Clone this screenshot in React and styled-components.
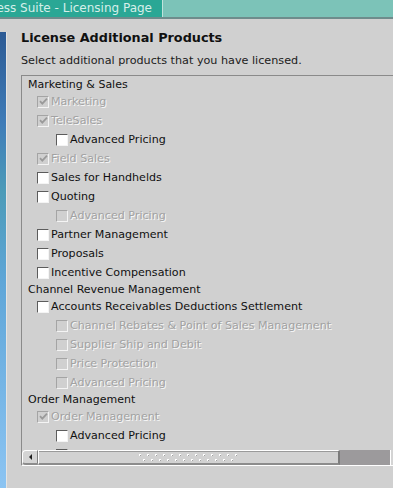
import React from "react";
import styled, { createGlobalStyle } from "styled-components";

const GlobalStyle = createGlobalStyle`
    html, body {
        margin: 0;
        padding: 0;
        background: #d0d0d0;
    }
    body {
        font-family: "DejaVu Sans", Verdana, sans-serif;
        overflow: hidden;
    }
`;

const groups = [
    {
        name: "Marketing & Sales",
        items: [
            { label: "Marketing", level: 1, checked: true, disabled: true },
            { label: "TeleSales", level: 1, checked: true, disabled: true },
            { label: "Advanced Pricing", level: 2 },
            { label: "Field Sales", level: 1, checked: true, disabled: true },
            { label: "Sales for Handhelds", level: 1 },
            { label: "Quoting", level: 1 },
            { label: "Advanced Pricing", level: 2, disabled: true },
            { label: "Partner Management", level: 1 },
            { label: "Proposals", level: 1 },
            { label: "Incentive Compensation", level: 1 },
        ],
    },
    {
        name: "Channel Revenue Management",
        items: [
            { label: "Accounts Receivables Deductions Settlement", level: 1 },
            { label: "Channel Rebates & Point of Sales Management", level: 2, disabled: true },
            { label: "Supplier Ship and Debit", level: 2, disabled: true },
            { label: "Price Protection", level: 2, disabled: true },
            { label: "Advanced Pricing", level: 2, disabled: true },
        ],
    },
    {
        name: "Order Management",
        items: [
            { label: "Order Management", level: 1, checked: true, disabled: true },
            { label: "Advanced Pricing", level: 2 },
            // only the top of this box shows above the scrollbar
            { label: "", level: 2 },
        ],
    },
];

function CheckBox({ checked, disabled }) {
    return (
        <Box $disabled={disabled}>
            {checked && (
                <svg width="9" height="9" viewBox="0 0 9 9">
                    <path
                        d="M1 4.2 L3.3 6.6 L8 1.6"
                        fill="none"
                        stroke={disabled ? "#9a9a9a" : "#202020"}
                        strokeWidth="1.8"
                    />
                </svg>
            )}
        </Box>
    );
}

function GripDots() {
    return (
        <svg width="100" height="9" viewBox="0 0 100 9">
            <defs>
                <pattern id="grip" width="8" height="9" patternUnits="userSpaceOnUse">
                    <rect x="0" y="1" width="2" height="2" fill="#ffffff" />
                    <rect x="1" y="2" width="1" height="1" fill="#a0a0a0" />
                    <rect x="4" y="6" width="2" height="2" fill="#ffffff" />
                    <rect x="5" y="7" width="1" height="1" fill="#a0a0a0" />
                </pattern>
            </defs>
            <rect width="100" height="9" fill="url(#grip)" />
        </svg>
    );
}

function App() {
    return (
        <Page>
            <GlobalStyle />
            <TitleBar>
                <TitleTab>E-Business Suite - Licensing Page</TitleTab>
                <TitleFill />
            </TitleBar>
            <Main>
                <DesktopStrip />
                <Window>
                    <Heading>License Additional Products</Heading>
                    <Subheading>Select additional products that you have licensed.</Subheading>
                    <ListBox>
                        <Viewport>
                            {groups.map((group) => (
                                <React.Fragment key={group.name}>
                                    <GroupLabel>{group.name}</GroupLabel>
                                    {group.items.map((item, index) => (
                                        <Row $level={item.level} key={group.name + index}>
                                            <CheckBox checked={item.checked} disabled={item.disabled} />
                                            {item.label && (
                                                <Label $disabled={item.disabled}>{item.label}</Label>
                                            )}
                                        </Row>
                                    ))}
                                </React.Fragment>
                            ))}
                        </Viewport>
                        <ScrollBar>
                            <ArrowButton>
                                <Arrow />
                            </ArrowButton>
                            <Thumb>
                                <GripDots />
                            </Thumb>
                            <Track />
                            <EndButton />
                        </ScrollBar>
                    </ListBox>
                </Window>
            </Main>
        </Page>
    );
}

const Page = styled.div`
    width: 393px;
    height: 488px;
    overflow: hidden;
    background: #d0d0d0;
    display: flex;
    flex-direction: column;
`;

const TitleBar = styled.div`
    display: flex;
    height: 17px;
    border-bottom: 2px solid #6e8c8c;
    flex-shrink: 0;
`;

const TitleTab = styled.div`
    width: 162px;
    background: #2aa795;
    color: #d6efea;
    font-size: 12px;
    line-height: 17px;
    white-space: nowrap;
    overflow: hidden;
    display: flex;
    justify-content: flex-end;
    padding-right: 10px;
    box-sizing: border-box;
`;

const TitleFill = styled.div`
    flex: 1;
    background: #7cc3b8;
    border-left: 1px solid #bfe3dc;
`;

const Main = styled.div`
    flex: 1;
    display: flex;
    min-height: 0;
`;

const DesktopStrip = styled.div`
    width: 6px;
    margin-top: 13px;
    border-right: 1px solid #e4e4e4;
    background: linear-gradient(
        180deg,
        #2c5a94 0%,
        #3f7cb8 20%,
        #4c9bb8 35%,
        #5fa6d8 55%,
        #8cc4f2 100%
    );
    flex-shrink: 0;
`;

const Window = styled.div`
    flex: 1;
    padding: 11px 0 0 14px;
    display: flex;
    flex-direction: column;
    min-width: 0;
`;

const Heading = styled.div`
    font-size: 12.8px;
    font-weight: bold;
    line-height: 16px;
    color: #101010;
    white-space: nowrap;
`;

const Subheading = styled.div`
    margin-top: 7px;
    font-size: 11.2px;
    line-height: 16px;
    color: #202020;
    white-space: nowrap;
`;

const ListBox = styled.div`
    margin-top: 6px;
    margin-right: -40px;
    height: 391px;
    box-sizing: border-box;
    border-top: 1px solid #8a8a8a;
    border-left: 1px solid #8a8a8a;
    border-bottom: 1px solid #ffffff;
    padding-top: 1px;
    display: flex;
    flex-direction: column;
`;

const Viewport = styled.div`
    height: 373px;
    overflow: hidden;
    display: flex;
    flex-direction: column;
`;

const GroupLabel = styled.div`
    height: 15px;
    line-height: 15px;
    padding-left: 6px;
    font-size: 11px;
    color: #101010;
    white-space: nowrap;
    flex-shrink: 0;
`;

const Row = styled.div`
    height: 19px;
    display: flex;
    align-items: center;
    gap: 2px;
    padding-left: ${(props) => (props.$level === 2 ? 34 : 15)}px;
    flex-shrink: 0;
`;

const Box = styled.div`
    width: 10px;
    height: 10px;
    background: ${(props) => (props.$disabled ? "#d0d0d0" : "#ffffff")};
    border-top: 1px solid ${(props) => (props.$disabled ? "#a4a4a4" : "#5c5c5c")};
    border-left: 1px solid ${(props) => (props.$disabled ? "#a4a4a4" : "#5c5c5c")};
    border-right: 1px solid #f4f4f4;
    border-bottom: 1px solid #f4f4f4;
    display: flex;
    align-items: center;
    justify-content: center;
    flex-shrink: 0;
`;

const Label = styled.span`
    font-size: 11.1px;
    line-height: 13px;
    white-space: nowrap;
    color: ${(props) => (props.$disabled ? "#a2a2a2" : "#101010")};
    text-shadow: ${(props) => (props.$disabled ? "1px 1px 0 #f8f8f8" : "none")};
`;

const ScrollBar = styled.div`
    height: 15px;
    display: flex;
    flex-shrink: 0;
`;

const ArrowButton = styled.div`
    width: 16px;
    box-sizing: border-box;
    background: #d4d4d4;
    border-top: 1px solid #ffffff;
    border-left: 1px solid #ffffff;
    border-right: 1px solid #808080;
    border-bottom: 2px solid #8c8c8c;
    border-radius: 4px 0 0 4px;
    display: flex;
    align-items: center;
    justify-content: center;
`;

const Arrow = styled.div`
    width: 0;
    height: 0;
    border-top: 3px solid transparent;
    border-bottom: 3px solid transparent;
    border-right: 3px solid #202020;
`;

const Thumb = styled.div`
    width: 302px;
    box-sizing: border-box;
    background: #d2d2d2;
    border-top: 1px solid #ffffff;
    border-left: 1px solid #ffffff;
    border-right: 2px solid #7c7c7c;
    border-bottom: 2px solid #8c8c8c;
    box-shadow: inset 0 1px 0 #9a9a9a;
    display: flex;
    align-items: center;
    justify-content: center;
`;

const Track = styled.div`
    width: 50px;
    background: #9c9a9c;
`;

const EndButton = styled.div`
    width: 20px;
    background: #d4d4d4;
    border-left: 1px solid #ffffff;
`;

export default App;
